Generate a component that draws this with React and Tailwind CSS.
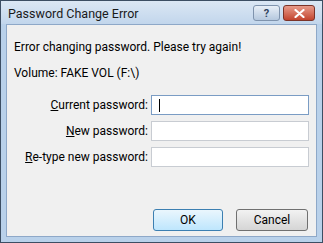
import React from "react";

const font = { fontFamily: 'Roboto, "Noto Sans", sans-serif' };

const Field = ({ accessKey, rest, focused }) => (
  <div className="flex items-center h-[20px]">
    <label className="w-[137px] pr-[3px] text-right text-[12px] text-[#000]">
      <span className="underline">{accessKey}</span>
      {rest}
    </label>
    <div
      className={
        "flex items-center h-[20px] w-[158px] bg-white border " +
        (focused ? "border-[#7a9cc4]" : "border-[#c8ccd2]")
      }
    >
      {focused && <div className="ml-[7px] w-px h-[13px] bg-black" />}
    </div>
  </div>
);

const App = () => {
  return (
    <div
      className="w-[323px] h-[243px] bg-[#b9d1ea] border border-[#3c4e63] flex flex-col overflow-hidden"
      style={font}
    >
      {/* Title bar */}
      <div className="h-[23px] flex items-start bg-gradient-to-b from-[#dbe7f4] to-[#c2d6ec] pl-[7px] pr-[7px]">
        <div className="mt-[5px] text-[12.5px] text-[#1a1a1a] flex-1 leading-[16px]">
          Password Change Error
        </div>
        <div className="flex mt-[4px] gap-[3px]">
          <div className="w-[27px] h-[16px] rounded-[3px] border border-[#7f93ad] bg-gradient-to-b from-[#e8eff7] to-[#b5c8de] flex items-center justify-center text-[11px] font-bold text-[#30445e] leading-none">
            ?
          </div>
          <div className="w-[32px] h-[16px] rounded-[3px] border border-[#7b3328] bg-gradient-to-b from-[#e79a8a] to-[#c2432d] flex items-center justify-center">
            <svg width="11" height="9" viewBox="0 0 11 9">
              <path d="M1.5 1 L9.5 8 M9.5 1 L1.5 8" stroke="#fff" strokeWidth="2.2" strokeLinecap="round" />
            </svg>
          </div>
        </div>
      </div>

      {/* Client area */}
      <div className="flex-1 mx-[5px] mb-[5px] border border-[#8ea8c8] bg-[#f0f0f0] flex flex-col px-[7px]">
        <div className="mt-[14px] text-[12px] text-black leading-[16px]">
          Error changing password. Please try again!
        </div>
        <div className="mt-[10px] text-[12px] text-black leading-[16px]">
          Volume: FAKE VOL (F:\)
        </div>
        <div className="mt-[14px] flex flex-col gap-[6px]">
          <Field accessKey="C" rest="urrent password:" focused />
          <Field accessKey="N" rest="ew password:" />
          <Field accessKey="R" rest="e-type new password:" />
        </div>
        <div className="mt-auto mb-[5px] flex justify-end gap-[13px] pr-[1px]">
          <button className="w-[70px] h-[22px] rounded-[3px] border border-[#3c7fb1] bg-gradient-to-b from-[#eaf6fd] to-[#bee6fd] text-[12px] text-black leading-none">
            OK
          </button>
          <button className="w-[72px] h-[22px] rounded-[3px] border border-[#707070] bg-gradient-to-b from-[#f2f2f2] to-[#d5d5d5] text-[12px] text-black leading-none">
            Cancel
          </button>
        </div>
      </div>
    </div>
  );
};

export default App;
